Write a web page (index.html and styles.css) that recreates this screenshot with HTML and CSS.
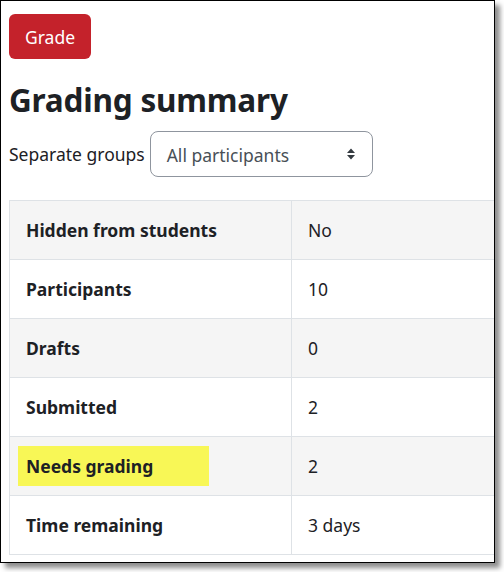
FILE: index.html
```html
<!DOCTYPE html>
<html>
<head>
<meta charset="utf-8">
<link rel="stylesheet" href="styles.css">
</head>
<body>
<div class="frame">
  <button class="btn-grade">Grade</button>
  <h2 class="title">Grading summary</h2>
  <div class="groups">
    <label class="groups-label">Separate groups</label>
    <div class="select">
      <span class="select-text">All participants</span>
      <svg class="select-arrow" width="10" height="14" viewBox="0 0 10 14"><path d="M1 6 L5 1.5 L9 6 Z M1 8 L5 12.5 L9 8 Z" fill="#343a40"/></svg>
    </div>
  </div>
  <table class="summary">
    <tr class="odd"><th>Hidden from students</th><td>No</td></tr>
    <tr><th>Participants</th><td>10</td></tr>
    <tr class="odd"><th>Drafts</th><td>0</td></tr>
    <tr><th>Submitted</th><td>2</td></tr>
    <tr class="odd"><th><span class="hl">Needs grading</span></th><td>2</td></tr>
    <tr><th>Time remaining</th><td>3 days</td></tr>
  </table>
</div>
</body>
</html>
```
FILE: styles.css
```css
html, body {
  margin: 0;
  padding: 0;
  background: #fff;
}
body {
  font-family: "Noto Sans", "Open Sans", sans-serif;
  color: #1d2125;
  padding-bottom: 9px;
}
.frame {
  box-sizing: border-box;
  width: 495px;
  height: 563px;
  border: 1px solid #000;
  padding: 0 0 0 8px;
  overflow: hidden;
  box-shadow: 5px 5px 5px rgba(0,0,0,0.45);
  background: #fff;
}
.btn-grade {
  display: block;
  margin-top: 13px;
  width: 82px;
  height: 45px;
  background: #c4222b;
  color: #fff;
  border: none;
  border-radius: 6px;
  font-family: "Noto Sans", "Open Sans", sans-serif;
  font-size: 17.5px;
  padding: 0;
}
.title {
  margin: 21px 0 0 0;
  font-size: 31.5px;
  font-weight: 700;
  line-height: 40px;
  letter-spacing: -0.2px;
}
.groups {
  display: flex;
  align-items: center;
  margin-top: 11px;
}
.groups-label {
  font-size: 17.5px;
  margin-right: 5px;
}
.select {
  box-sizing: border-box;
  width: 223px;
  height: 46px;
  border: 1px solid #8f959e;
  border-radius: 8px;
  display: flex;
  align-items: center;
  justify-content: space-between;
  padding: 0 16px 0 16px;
}
.select-text {
  font-size: 17.5px;
  color: #495057;
  margin-top: 2px;
}
.select-arrow {
  display: block;
}
.summary {
  margin-top: 23px;
  border-collapse: collapse;
  width: 540px;
  font-size: 17.5px;
}
.summary th, .summary td {
  border: 1px solid #dee2e6;
  text-align: left;
  height: 59px;
  padding: 0 16px;
  vertical-align: middle;
  box-sizing: border-box;
}
.summary th {
  width: 282px;
  font-weight: 700;
}
.summary td {
  color: #1d2125;
}
.summary tr.odd {
  background: #f5f5f5;
}
.hl {
  display: inline-block;
  background: #f8f756;
  margin-left: -8px;
  padding: 8px 56px 8px 8px;
}
```
